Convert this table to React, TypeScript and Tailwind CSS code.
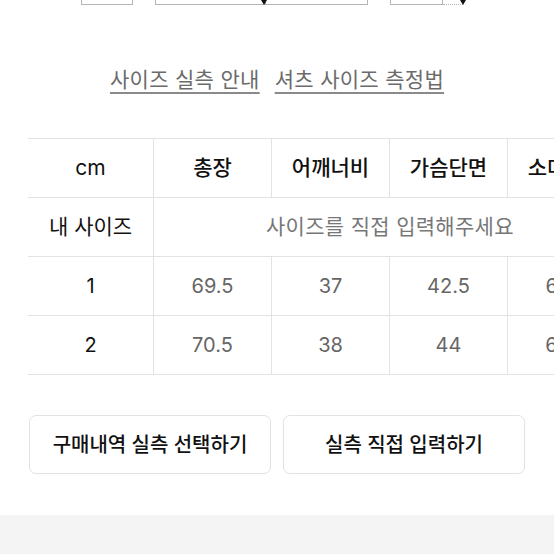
import React from "react";

const cols = ["총장", "어깨너비", "가슴단면", "소매길이"];
const rows = [
  { size: "1", values: ["69.5", "37", "42.5", "63.5"] },
  { size: "2", values: ["70.5", "38", "44", "64.5"] },
];

function Caret() {
  return (
    <svg width="6" height="5" viewBox="0 0 6 5" className="absolute -right-[3px] top-0">
      <path d="M0 0 L6 0 L3 5 Z" fill="#111" />
    </svg>
  );
}

export default function App() {
  return (
    <div
      className="w-[554px] h-[554px] bg-white overflow-hidden relative"
      style={{ fontFamily: 'Inter, "Noto Sans CJK KR", "Noto Sans", sans-serif' }}
    >
      {/* bottom of the option selects above */}
      <div className="flex h-[5px] items-end">
        <div className="ml-[81px] w-[52px] h-[5px] border-x border-b border-[#b5b5b5]" />
        <div className="ml-[22px] w-[110px] h-[5px] border-x border-b border-[#b5b5b5] relative">
          <Caret />
        </div>
        <div className="w-[103px] h-[5px] border-x border-b border-[#b5b5b5]" />
        <div className="ml-[22px] w-[53px] h-[5px] border-x border-b border-[#b5b5b5]" />
        <div className="w-[20px] h-[5px] border-b border-dotted border-[#b5b5b5] relative">
          <Caret />
        </div>
      </div>

      <div className="flex justify-center gap-[15px] mt-[61px] text-[21px] text-[#6b6b6b] leading-[28px] tracking-[0.3px]">
        <span className="underline underline-offset-[5px] decoration-[#8a8a8a]">사이즈 실측 안내</span>
        <span className="underline underline-offset-[5px] decoration-[#8a8a8a]">셔츠 사이즈 측정법</span>
      </div>

      <div className="mt-[44px] ml-[28px] grid grid-cols-[125px_118px_118px_118px_118px] w-[597px] border-b border-[#e3e3e3]">
        <div className="h-[59px] border-t border-[#e3e3e3] flex items-center justify-center text-[21px] text-[#111]">cm</div>
        {cols.map((c) => (
          <div
            key={c}
            className="h-[59px] border-t border-l border-[#e3e3e3] flex items-center justify-center text-[21px] font-medium text-[#111] whitespace-nowrap"
          >
            {c}
          </div>
        ))}

        <div className="h-[59px] border-t border-[#e3e3e3] flex items-center justify-center text-[21px] text-[#111]">내 사이즈</div>
        <div className="col-span-4 h-[59px] border-t border-l border-[#e3e3e3] flex items-center">
          <span className="ml-[112px] text-[21px] text-[#777] tracking-[0.3px]">사이즈를 직접 입력해주세요</span>
        </div>

        {rows.map((r) => (
          <React.Fragment key={r.size}>
            <div className="h-[59px] border-t border-[#e3e3e3] flex items-center justify-center text-[20px] text-[#111]">{r.size}</div>
            {r.values.map((v, i) => (
              <div
                key={i}
                className="h-[59px] border-t border-l border-[#e3e3e3] flex items-center justify-center text-[20px] text-[#666] whitespace-nowrap"
              >
                {v}
              </div>
            ))}
          </React.Fragment>
        ))}
      </div>

      <div className="flex gap-[12px] mt-[40px] ml-[29px]">
        <button className="w-[242px] h-[59px] rounded-[7px] border border-[#e2e2e2] text-[20px] font-medium text-[#111]">
          구매내역 실측 선택하기
        </button>
        <button className="w-[242px] h-[59px] rounded-[7px] border border-[#e2e2e2] text-[20px] font-medium text-[#111]">
          실측 직접 입력하기
        </button>
      </div>

      <div className="absolute left-0 right-0 top-[515px] bottom-0 bg-[#f4f4f4]" />
    </div>
  );
}
